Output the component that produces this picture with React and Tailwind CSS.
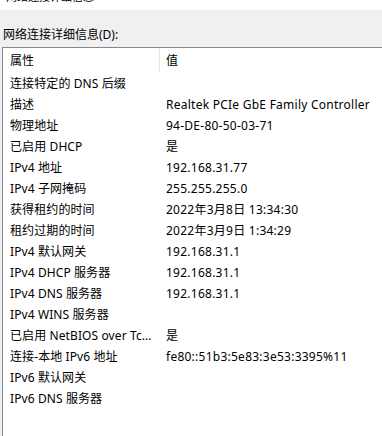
export default function App() {
  const rows = [
    ["连接特定的 DNS 后缀", ""],
    ["描述", "Realtek PCIe GbE Family Controller"],
    ["物理地址", "94-DE-80-50-03-71"],
    ["已启用 DHCP", "是"],
    ["IPv4 地址", "192.168.31.77"],
    ["IPv4 子网掩码", "255.255.255.0"],
    ["获得租约的时间", "2022年3月8日 13:34:30"],
    ["租约过期的时间", "2022年3月9日 1:34:29"],
    ["IPv4 默认网关", "192.168.31.1"],
    ["IPv4 DHCP 服务器", "192.168.31.1"],
    ["IPv4 DNS 服务器", "192.168.31.1"],
    ["IPv4 WINS 服务器", ""],
    ["已启用 NetBIOS over Tc...", "是"],
    ["连接-本地 IPv6 地址", "fe80::51b3:5e83:3e53:3395%11"],
    ["IPv6 默认网关", ""],
    ["IPv6 DNS 服务器", ""],
  ];
  return (
    <div
      className="w-[382px] h-[436px] overflow-hidden bg-[#f0f0f0] flex flex-col text-[12px] text-black"
      style={{ fontFamily: '"Noto Sans", "Noto Sans CJK SC", sans-serif' }}
    >
      <div className="h-[10px] bg-white overflow-hidden relative">
        <div className="absolute left-[6px] top-[-9px] leading-[12px] text-[11px]">网络连接详细信息</div>
      </div>
      <div className="h-[37px] flex items-center pl-[3px] pt-[12px] leading-none">
        <span>网络连接详细信息(D):</span>
      </div>
      <div className="flex-1 ml-[2px] bg-white border-l border-t border-[#828790] flex flex-col">
        <div className="h-[25px] flex items-center">
          <div className="w-[156px] pl-[7px]">属性</div>
          <div className="w-px h-full bg-[#e5e5e5]" />
          <div className="pl-[6px]">值</div>
        </div>
        {rows.map(([k, v], i) => (
          <div key={i} className="h-[21px] flex items-center whitespace-nowrap">
            <div className="w-[157px] pl-[7px] tracking-[0.1px]">{k}</div>
            <div className="pl-[6px] tracking-[0.25px]">{v}</div>
          </div>
        ))}
      </div>
    </div>
  );
}
